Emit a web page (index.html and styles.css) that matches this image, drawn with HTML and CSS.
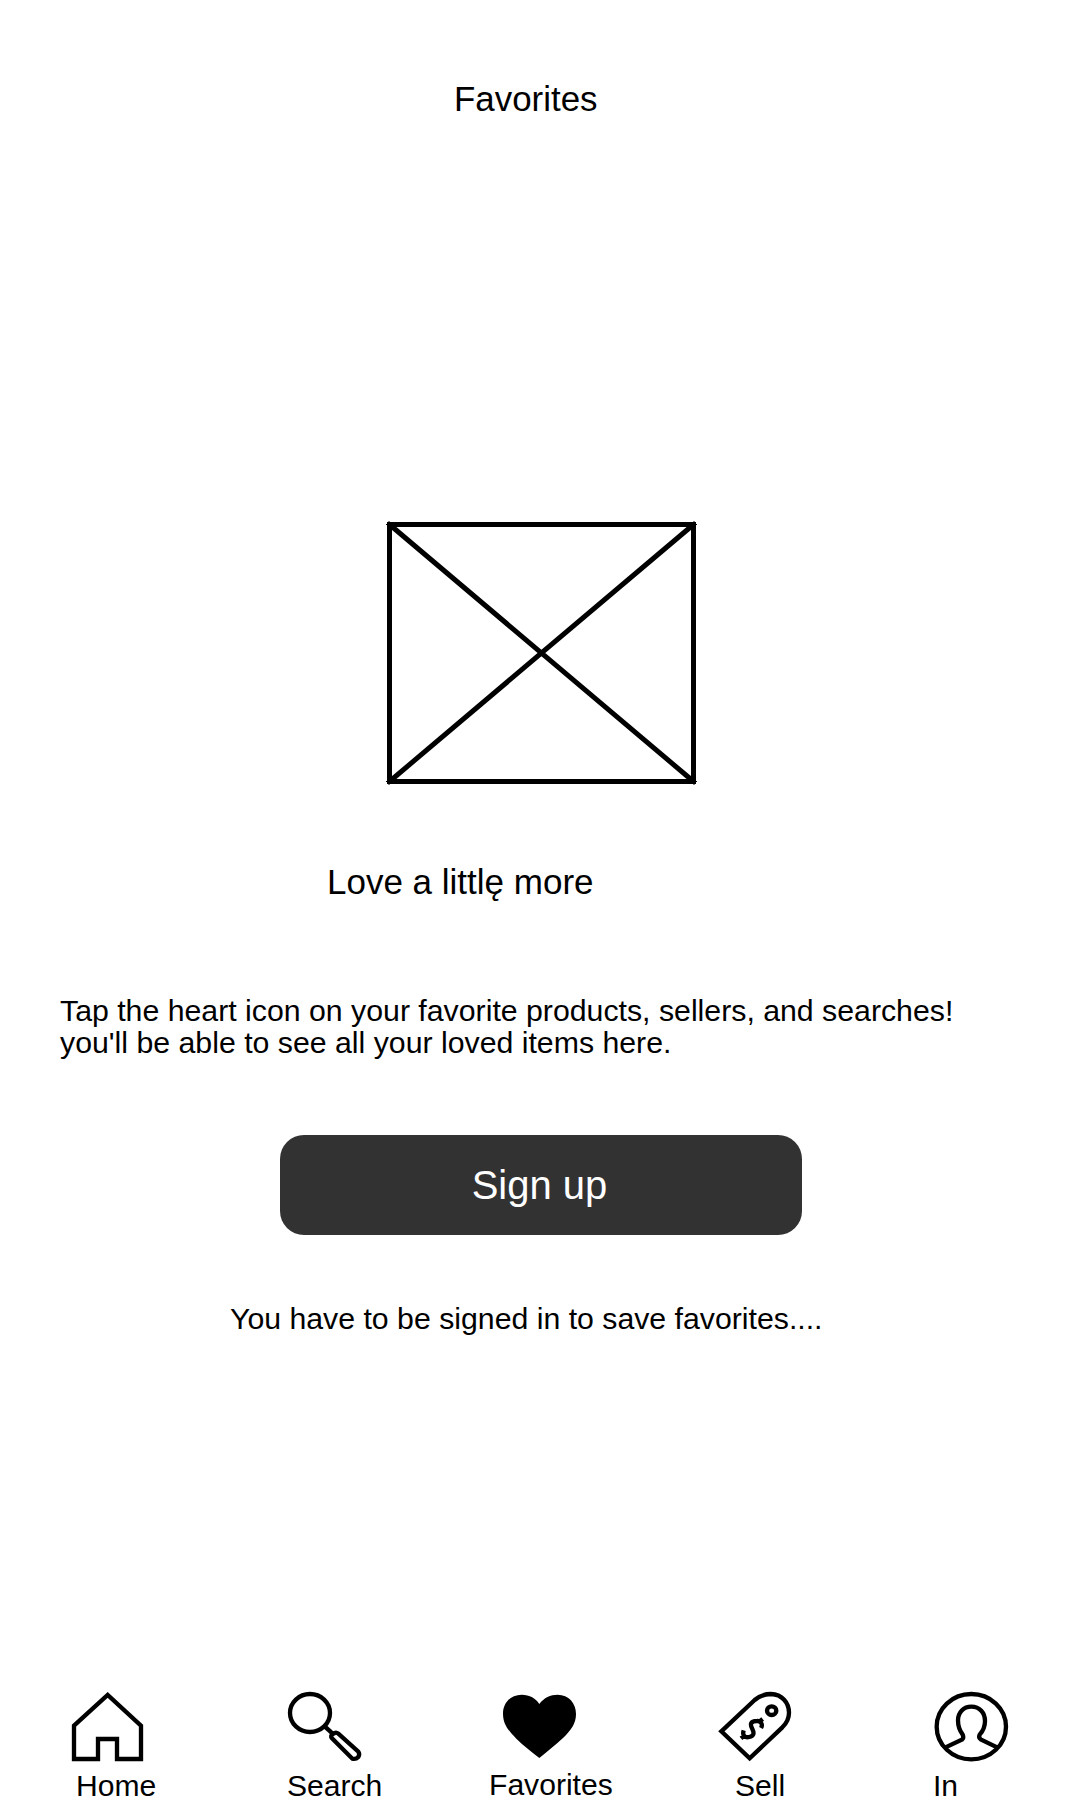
FILE: index.html
```html
<!DOCTYPE html>
<html lang="en">
<head>
<meta charset="utf-8">
<title>Favorites</title>
<link rel="stylesheet" href="styles.css">
</head>
<body>
<div class="screen">
  <header class="header"><h1 class="title">Favorites</h1></header>
  <main class="content">
    <svg class="placeholder" viewBox="0 0 309 262" aria-hidden="true">
      <path d="M2.5 2.5H306.5V259.5H2.5ZM2.5 2.5L306.5 259.5M306.5 2.5L2.5 259.5"/>
      <path class="tick" d="M2 -1V6M307 -1V6M2 256V263M307 256V263M-1 2.5H5M304 2.5H310M-1 259.5H5M304 259.5H310"/>
    </svg>
    <h2 class="subtitle">Love a littlę more</h2>
    <p class="text">Tap the heart icon on your favorite products, sellers, and searches!<br>you'll be able to see all your loved items here.</p>
    <button class="button" type="button">Sign up</button>
    <p class="note">You have to be signed in to save favorites....</p>
  </main>
  <nav class="nav">
    <a class="item home">
      <svg class="icon" viewBox="0 0 360 270"><path d="M72 137L173 45L273 137V237H201V177H144V237H72Z"/></svg>
      <span class="label">Home</span>
    </a>
    <a class="item search">
      <svg class="icon" viewBox="0 0 360 270"><ellipse cx="120" cy="99" rx="60" ry="57"/><path d="M164 139L188 161"/><path d="M186 175Q180 168 188 162L194 159Q199 156 205 161L265 215Q270 222 265 231Q257 239 247 236Z"/></svg>
      <span class="label">Search</span>
    </a>
    <a class="item favorites">
      <svg class="icon" viewBox="0 0 360 270"><path class="solid" d="M178 72C192 53 211 44 233 44C266 44 288 69 288 102C288 131 273 151 249 174C226 196 201 215 178 234C155 215 131 198 109 176C84 151 69 131 69 101C69 68 92 44 125 44C149 44 168 55 178 72Z"/></svg>
      <span class="label">Favorites</span>
    </a>
    <a class="item sell">
      <svg class="icon" viewBox="0 0 360 270"><path d="M64 154L164 60C180 46 195 42 213 42C246 43 267 68 267 98C267 116 259 130 247 142L149 235Z"/><ellipse cx="215" cy="92" rx="14" ry="13"/><path d="M183 144C190 132 181 122 171 123C150 123 150 134 157 147C163 159 162 168 148 171C135 174 126 167 131 151M177 126L188 117M123 175L134 166"/></svg>
      <span class="label">Sell</span>
    </a>
    <a class="item account">
      <svg class="icon" viewBox="0 0 360 270"><ellipse cx="184" cy="140" rx="104" ry="98"/><path d="M105 203L157 178Q162 174 158 164C148 151 144 137 144 121C144 97 161 80 184 80C209 80 225 98 225 123C225 139 219 153 209 164Q205 173 212 178L263 203"/></svg>
      <span class="label">In</span>
    </a>
  </nav>
</div>
</body>
</html>
```
FILE: styles.css
```css
* { box-sizing: border-box; }
body {
  margin: 0;
  background: #fff;
  color: #000;
  font-family: "Liberation Sans", Arial, sans-serif;
}
.screen {
  display: flex;
  flex-direction: column;
  width: 1080px;
  height: 1800px;
  overflow: hidden;
}
.header { padding: 79px 0 0 454px; }
.title, .subtitle {
  margin: 0;
  font-size: 35px;
  font-weight: 400;
  line-height: 40px;
}
.title { font-size: 34.9px; }
.content {
  display: flex;
  flex-direction: column;
  align-items: flex-start;
  flex: 1;
  padding-top: 403px;
}
.placeholder {
  width: 309px;
  height: 262px;
  margin-left: 387px;
  overflow: visible;
  fill: none;
  stroke: #000;
  stroke-width: 5;
}
.tick { stroke-width: 1; }
.subtitle { margin: 78px 0 0 327px; }
.text {
  margin: 93px 0 0 60px;
  font-size: 30.27px;
  line-height: 32px;
  white-space: nowrap;
}
.button {
  width: 522px;
  height: 100px;
  margin: 76px 0 0 280px;
  padding: 0 3px 0 0;
  border: 0;
  border-radius: 24px;
  background: #323232;
  color: #fff;
  font: 40px/44px "Liberation Sans", Arial, sans-serif;
}
.note {
  margin: 67px 0 0 230px;
  font-size: 30.25px;
  line-height: 34px;
  white-space: nowrap;
}
.nav {
  display: grid;
  grid-template-columns: 220px 210px 220px 210px 1fr;
  height: 120px;
  padding-left: 50px;
}
.item { display: flex; flex-direction: column; }
.icon {
  width: 120px;
  height: 90px;
  fill: none;
  stroke: #000;
  stroke-width: 13;
}
.solid { fill: #000; stroke: none; }
.label {
  padding-top: 2px;
  font-size: 30.1px;
  line-height: 28px;
}
.home .label { padding-left: 26px; }
.search .label { padding-left: 17px; }
.favorites .label { padding-top: 1px; padding-left: 9px; }
.sell .label { padding-left: 35px; }
.account .label { padding-left: 23px; }
```
